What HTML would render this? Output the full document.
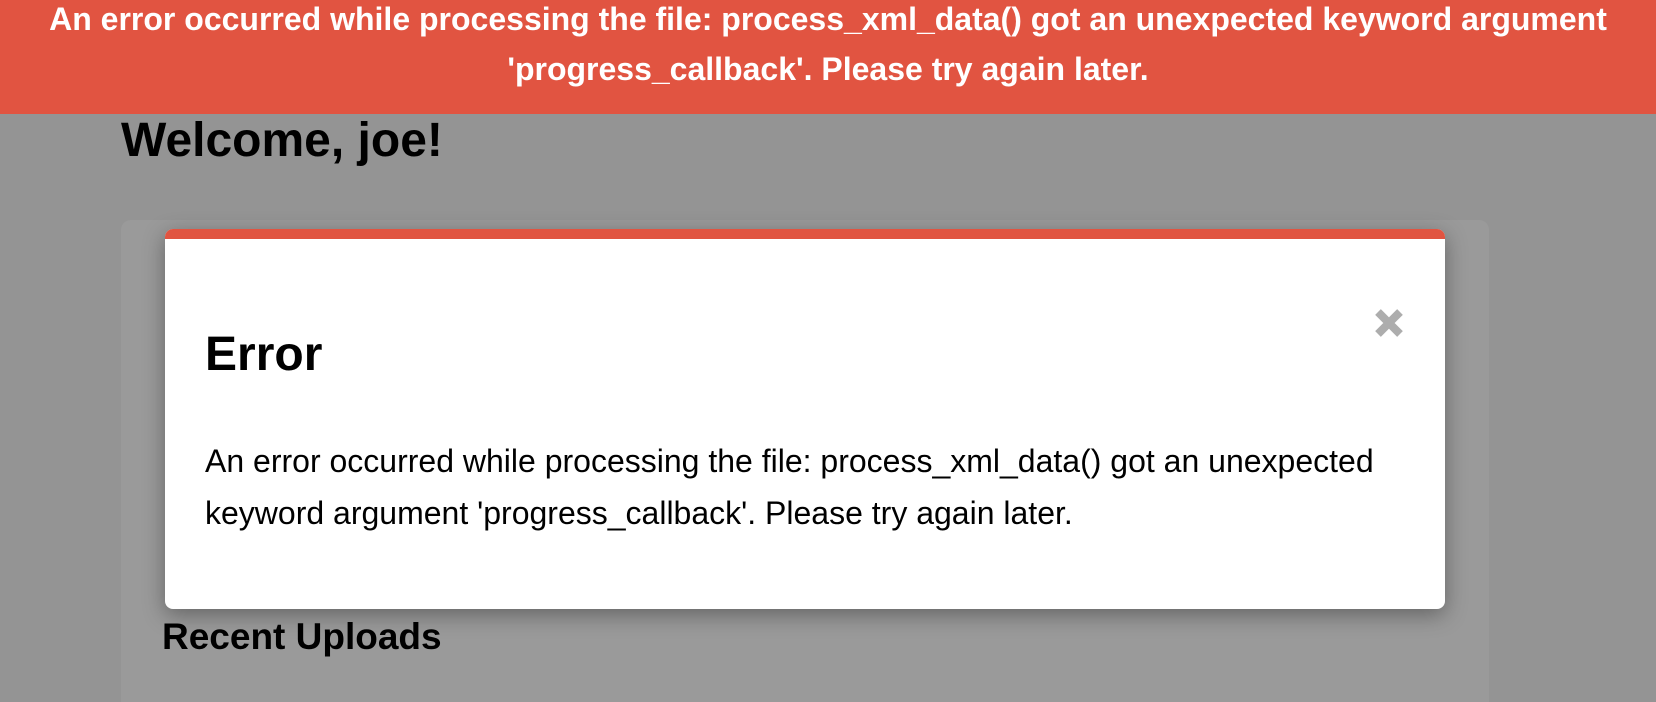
<!DOCTYPE html>
<html><head><meta charset="utf-8"><style>
html,body{margin:0;padding:0;width:1656px;height:702px;overflow:hidden;background:#949494;font-family:"Liberation Sans",Arial,sans-serif;position:relative}
.banner{position:absolute;left:0;top:0;width:1656px;height:114px;background:#e15441;color:#fff;font-weight:bold;font-size:32px;text-align:center;line-height:50px}
.banner div{position:absolute;left:0;right:0;top:-6px;white-space:nowrap}
h1{position:absolute;left:121px;top:109px;margin:0;font-size:48px;line-height:64px;white-space:nowrap}
.card{position:absolute;left:121px;top:220px;width:1368px;height:482px;background:#9a9a9a;border-radius:10px 10px 0 0}
.rec{position:absolute;left:162px;top:615px;margin:0;font-size:37px;font-weight:bold;line-height:44px;white-space:nowrap}
.modal{position:absolute;left:165px;top:229px;width:1280px;height:380px;background:#fff;border-radius:8px;box-shadow:0 6px 22px rgba(0,0,0,.35);overflow:hidden}
.modal .bar{height:10px;background:#e15441}
.err{position:absolute;left:40px;top:94px;margin:0;font-size:48px;font-weight:bold;line-height:64px}
.msg{position:absolute;left:40px;top:206px;font-size:32px;line-height:52px;white-space:nowrap;color:#000}
.x{position:absolute;left:1209px;top:79px;width:30px;height:30px}
</style></head><body>
<div class="banner"><div>An error occurred while processing the file: process_xml_data() got an unexpected keyword argument<br>'progress_callback'. Please try again later.</div></div>
<h1>Welcome, joe!</h1>
<div class="card"></div>
<div class="rec">Recent Uploads</div>
<div class="modal"><div class="bar"></div>
<div class="err">Error</div>
<svg class="x" viewBox="0 0 30 30"><path d="M4 4L26 26M26 4L4 26" stroke="#adadad" stroke-width="8" stroke-linecap="butt"/></svg>
<div class="msg">An error occurred while processing the file: process_xml_data() got an unexpected<br>keyword argument 'progress_callback'. Please try again later.</div>
</div>
</body></html>
